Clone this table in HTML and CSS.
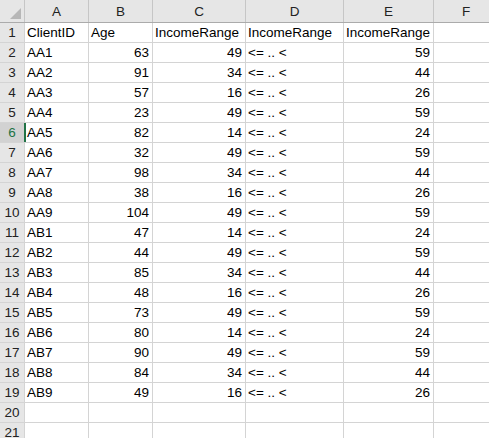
FILE: index.html
```html
<!DOCTYPE html>
<html>
<head>
<meta charset="utf-8">
<link rel="stylesheet" href="styles.css">
</head>
<body>
<div class="sheet">
  <div class="row head">
    <div class="corner"><span class="tri"></span></div>
    <div class="ch">A</div><div class="ch">B</div><div class="ch">C</div><div class="ch">D</div><div class="ch">E</div><div class="ch">F</div>
  </div>
  <div class="row"><div class="rh">1</div><div class="c">ClientID</div><div class="c">Age</div><div class="c">IncomeRange</div><div class="c">IncomeRange</div><div class="c">IncomeRange</div><div class="c"></div></div>
  <div class="row"><div class="rh">2</div><div class="c">AA1</div><div class="c n">63</div><div class="c n">49</div><div class="c">&lt;= .. &lt;</div><div class="c n">59</div><div class="c"></div></div>
  <div class="row"><div class="rh">3</div><div class="c">AA2</div><div class="c n">91</div><div class="c n">34</div><div class="c">&lt;= .. &lt;</div><div class="c n">44</div><div class="c"></div></div>
  <div class="row"><div class="rh">4</div><div class="c">AA3</div><div class="c n">57</div><div class="c n">16</div><div class="c">&lt;= .. &lt;</div><div class="c n">26</div><div class="c"></div></div>
  <div class="row"><div class="rh">5</div><div class="c">AA4</div><div class="c n">23</div><div class="c n">49</div><div class="c">&lt;= .. &lt;</div><div class="c n">59</div><div class="c"></div></div>
  <div class="row sel"><div class="rh">6</div><div class="c active">AA5</div><div class="c n">82</div><div class="c n">14</div><div class="c">&lt;= .. &lt;</div><div class="c n">24</div><div class="c"></div></div>
  <div class="row"><div class="rh">7</div><div class="c">AA6</div><div class="c n">32</div><div class="c n">49</div><div class="c">&lt;= .. &lt;</div><div class="c n">59</div><div class="c"></div></div>
  <div class="row"><div class="rh">8</div><div class="c">AA7</div><div class="c n">98</div><div class="c n">34</div><div class="c">&lt;= .. &lt;</div><div class="c n">44</div><div class="c"></div></div>
  <div class="row"><div class="rh">9</div><div class="c">AA8</div><div class="c n">38</div><div class="c n">16</div><div class="c">&lt;= .. &lt;</div><div class="c n">26</div><div class="c"></div></div>
  <div class="row"><div class="rh">10</div><div class="c">AA9</div><div class="c n">104</div><div class="c n">49</div><div class="c">&lt;= .. &lt;</div><div class="c n">59</div><div class="c"></div></div>
  <div class="row"><div class="rh">11</div><div class="c">AB1</div><div class="c n">47</div><div class="c n">14</div><div class="c">&lt;= .. &lt;</div><div class="c n">24</div><div class="c"></div></div>
  <div class="row"><div class="rh">12</div><div class="c">AB2</div><div class="c n">44</div><div class="c n">49</div><div class="c">&lt;= .. &lt;</div><div class="c n">59</div><div class="c"></div></div>
  <div class="row"><div class="rh">13</div><div class="c">AB3</div><div class="c n">85</div><div class="c n">34</div><div class="c">&lt;= .. &lt;</div><div class="c n">44</div><div class="c"></div></div>
  <div class="row"><div class="rh">14</div><div class="c">AB4</div><div class="c n">48</div><div class="c n">16</div><div class="c">&lt;= .. &lt;</div><div class="c n">26</div><div class="c"></div></div>
  <div class="row"><div class="rh">15</div><div class="c">AB5</div><div class="c n">73</div><div class="c n">49</div><div class="c">&lt;= .. &lt;</div><div class="c n">59</div><div class="c"></div></div>
  <div class="row"><div class="rh">16</div><div class="c">AB6</div><div class="c n">80</div><div class="c n">14</div><div class="c">&lt;= .. &lt;</div><div class="c n">24</div><div class="c"></div></div>
  <div class="row"><div class="rh">17</div><div class="c">AB7</div><div class="c n">90</div><div class="c n">49</div><div class="c">&lt;= .. &lt;</div><div class="c n">59</div><div class="c"></div></div>
  <div class="row"><div class="rh">18</div><div class="c">AB8</div><div class="c n">84</div><div class="c n">34</div><div class="c">&lt;= .. &lt;</div><div class="c n">44</div><div class="c"></div></div>
  <div class="row"><div class="rh">19</div><div class="c">AB9</div><div class="c n">49</div><div class="c n">16</div><div class="c">&lt;= .. &lt;</div><div class="c n">26</div><div class="c"></div></div>
  <div class="row"><div class="rh">20</div><div class="c"></div><div class="c"></div><div class="c"></div><div class="c"></div><div class="c"></div><div class="c"></div></div>
  <div class="row"><div class="rh">21</div><div class="c"></div><div class="c"></div><div class="c"></div><div class="c"></div><div class="c"></div><div class="c"></div></div>
</div>
</body>
</html>
```

FILE: styles.css
```css
html, body {
  margin: 0;
  padding: 0;
  background: #ffffff;
  overflow: hidden;
}
body {
  width: 489px;
  height: 438px;
}
.sheet {
  width: 498px;
  font-family: "Liberation Sans", Arial, sans-serif;
  font-size: 13.5px;
  color: #000;
}
.row {
  display: grid;
  grid-template-columns: 24px 63px 63px 92px 97px 89px 64px;
  column-gap: 1px;
  background: #d4d4d4;
  border-bottom: 1px solid #d4d4d4;
  height: 19px;
}
.row.head {
  height: 22px;
  background: #c6c6c6;
  border-bottom: 1px solid #ababab;
}
.corner {
  background: #e6e6e6;
  position: relative;
}
.tri {
  position: absolute;
  left: 10px;
  top: 8px;
  width: 0;
  height: 0;
  border-style: solid;
  border-width: 0 0 11px 11px;
  border-color: transparent transparent #b7b7b7 transparent;
}
.ch {
  background: #e6e6e6;
  color: #222;
  text-align: center;
  padding-top: 2px;
  line-height: 20px;
}
.rh {
  background: #e6e6e6;
  color: #222;
  text-align: center;
  padding-top: 1px;
  line-height: 18px;
}
.sel .rh {
  background: #d2d2d2;
  color: #217346;
}
.c {
  background: #fff;
  padding: 1px 2px 0 2px;
  line-height: 18px;
  white-space: nowrap;
  overflow: hidden;
}
.c.n {
  text-align: right;
  padding-right: 3px;
}
.c.active {
  box-shadow: inset 1px 0 0 #217346;
}
.sel {
  background: linear-gradient(to right, #d4d4d4 24px, #217346 24px, #217346 25px, #d4d4d4 25px);
}
```
